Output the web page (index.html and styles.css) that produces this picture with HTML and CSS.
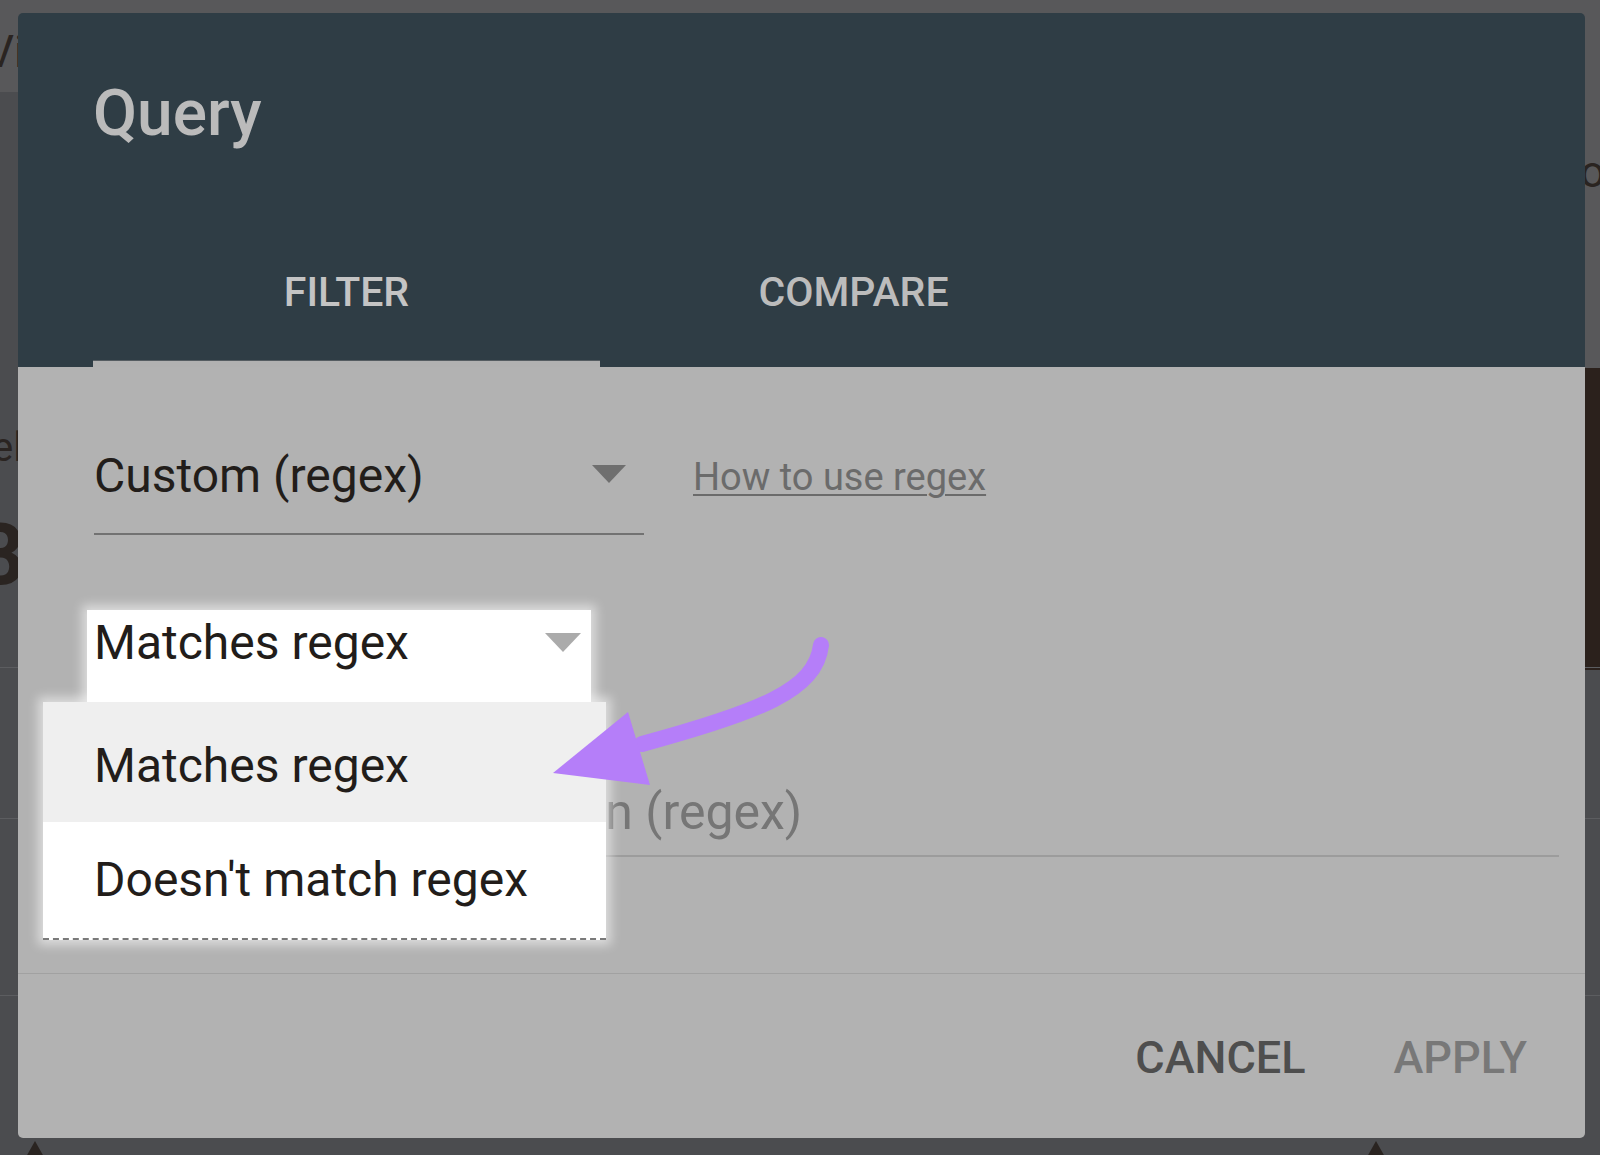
FILE: index.html
```html
<!DOCTYPE html>
<html lang="en">
<head>
<meta charset="utf-8">
<title>Query filter</title>
<link rel="stylesheet" href="styles.css">
</head>
<body>
<div class="scene">
  <div class="behind" aria-hidden="true">
    <div class="bg-strip"></div>
    <div class="bg-right-top"></div>
    <div class="bg-right-brown"></div>
    <div class="bg-line l1"></div>
    <div class="bg-line l2"></div>
    <div class="bg-line l3"></div>
    <span class="bg-txt t-v">Vi</span>
    <span class="bg-txt t-el">el</span>
    <span class="bg-txt t-8">8</span>
    <span class="bg-txt t-o">o</span>
    <i class="bg-tri tri1"></i>
    <i class="bg-tri tri2"></i>
  </div>

  <div class="dialog">
    <header class="dlg-header">
      <h1 class="dlg-title">Query</h1>
      <nav class="tabs">
        <div class="tab active">FILTER</div>
        <div class="tab">COMPARE</div>
      </nav>
    </header>

    <section class="dlg-body">
      <div class="row-type">
        <div class="select-type"><span>Custom (regex)</span><i class="caret"></i></div>
        <a class="help-link">How to use regex</a>
      </div>

      <div class="match-wrap">
        <div class="select-open"><span>Matches regex</span><i class="caret caret-light"></i></div>
        <ul class="menu">
          <li class="menu-item hovered">Matches regex</li>
          <li class="menu-item second">Doesn't match regex</li>
        </ul>
      </div>

      <div class="input-line"><span class="placeholder">Regular expression (regex)</span></div>
    </section>

    <footer class="dlg-footer">
      <button class="btn cancel">CANCEL</button>
      <button class="btn apply">APPLY</button>
    </footer>
  </div>

  <svg class="annotation" viewBox="0 0 1600 1155" width="1600" height="1155" aria-hidden="true">
    <path d="M 821 645 C 816 690, 760 712, 642 744" fill="none" stroke="#b57ef9" stroke-width="16" stroke-linecap="round"/>
    <polygon points="628,712 553,773 650,785" fill="#b57ef9"/>
  </svg>
</div>
</body>
</html>
```

FILE: styles.css
```css
html, body {
  margin: 0;
  padding: 0;
}

body {
  background: #4b4c4f;
  font-family: Roboto, "Noto Sans", "Liberation Sans", sans-serif;
}

.scene {
  position: relative;
  width: 1600px;
  height: 1155px;
  overflow: hidden;
  padding-top: 13px;
  box-sizing: border-box;
}

/* ---------- page behind the modal ---------- */
.behind {
  position: absolute;
  inset: 0;
  z-index: 0;
}

.bg-strip {
  position: absolute;
  left: 0;
  top: 0;
  width: 1600px;
  height: 92px;
  background: #58585a;
}

.bg-right-top {
  position: absolute;
  right: 0;
  top: 0;
  width: 20px;
  height: 368px;
  background: #58585a;
}

.bg-right-brown {
  position: absolute;
  right: 0;
  top: 368px;
  width: 20px;
  height: 302px;
  background: #2b211c;
}

.bg-line {
  position: absolute;
  left: 0;
  width: 1600px;
  height: 1px;
  background: #5c5d60;
}
.bg-line.l1 { top: 667px; }
.bg-line.l2 { top: 818px; }
.bg-line.l3 { top: 995px; }

.bg-txt {
  position: absolute;
  color: #2a2421;
  line-height: 1;
}
.t-v { left: -14px; top: 30px; font-size: 44px; }
.t-el { left: -8px; top: 428px; font-size: 40px; }
.t-8 { left: -24px; top: 512px; font-size: 86px; font-weight: 700; }
.t-o { left: 1580px; top: 150px; font-size: 44px; }

.bg-tri {
  position: absolute;
  width: 0;
  height: 0;
  border-left: 9px solid transparent;
  border-right: 9px solid transparent;
  border-bottom: 16px solid #2a2421;
}
.tri1 { left: 26px; top: 1141px; }
.tri2 { left: 1367px; top: 1141px; }

/* ---------- dialog ---------- */
.dialog {
  position: relative;
  z-index: 1;
  margin-left: 18px;
  width: 1567px;
  height: 1125px;
  display: flex;
  flex-direction: column;
  border-radius: 5px;
  overflow: hidden;
}

.dlg-header {
  flex: none;
  height: 354px;
  background: #2f3d45;
  padding-left: 75px;
  display: flex;
  flex-direction: column;
  box-sizing: border-box;
}

.dlg-title {
  margin: 69px 0 0;
  font-size: 64px;
  line-height: 64px;
  font-weight: 500;
  color: #bbbbbb;
}

.tabs {
  margin-top: auto;
  display: flex;
  height: 95px;
}

.tab {
  position: relative;
  width: 507px;
  text-align: center;
  font-size: 41px;
  line-height: 40px;
  font-weight: 500;
  color: #bcbcbc;
}
.tab.active { color: #c4c4c4; }

.tab.active::after {
  content: "";
  position: absolute;
  left: 0;
  right: 0;
  bottom: 0;
  height: 6px;
  background: #b1b1b1;
  border-top: 1px solid #555c61;
}

/* ---------- body ---------- */
.dlg-body {
  flex: 1;
  background: #b2b2b2;
  padding: 85px 26px 0 76px;
  position: relative;
}

.row-type {
  display: flex;
  align-items: flex-start;
}

.select-type {
  width: 550px;
  height: 83px;
  box-sizing: border-box;
  border-bottom: 2px solid #727272;
  padding-right: 18px;
  display: flex;
  justify-content: space-between;
  align-items: flex-start;
  font-size: 48px;
  line-height: 48px;
  color: #221d1a;
}

.caret {
  width: 0;
  height: 0;
  margin-top: 13px;
  border-left: 17px solid transparent;
  border-right: 17px solid transparent;
  border-top: 18px solid #6f6f6f;
}

.caret-light {
  margin-top: 14px;
  border-left-width: 18px;
  border-right-width: 18px;
  border-top: 19px solid #ababab;
}

.help-link {
  margin-left: 49px;
  margin-top: 6px;
  font-size: 38px;
  line-height: 38px;
  color: #6b6b6b;
  text-decoration: underline;
  text-decoration-thickness: 2px;
  text-underline-offset: 4px;
}

.match-wrap {
  position: relative;
  margin-top: 75px;
  margin-left: -7px;
  width: 504px;
}

.select-open {
  height: 92px;
  box-sizing: border-box;
  background: #ffffff;
  padding: 9px 10px 0 7px;
  display: flex;
  justify-content: space-between;
  align-items: flex-start;
  font-size: 48px;
  line-height: 48px;
  color: #221d1a;
  box-shadow: 0 0 10px 5px rgba(255, 255, 255, 0.55);
}

.menu {
  position: absolute;
  z-index: 2;
  top: 92px;
  left: -44px;
  width: 563px;
  margin: 0;
  padding: 0;
  list-style: none;
  background: #ffffff;
  border-bottom: 2px dashed #7a7a7a;
  box-shadow: 0 0 10px 5px rgba(255, 255, 255, 0.55);
}

.menu-item {
  box-sizing: border-box;
  padding-left: 51px;
  font-size: 48px;
  line-height: 48px;
  color: #221d1a;
}

.menu-item.hovered {
  height: 120px;
  padding-top: 40px;
  background: #efefef;
}

.menu-item.second {
  height: 116px;
  padding-top: 34px;
  background: #ffffff;
}

.input-line {
  margin-top: 86px;
  height: 67px;
  border-bottom: 2px solid #9c9c9c;
  font-size: 50px;
  line-height: 48px;
}

.placeholder {
  display: inline-block;
  margin-left: 115px;
  color: #767676;
}

/* ---------- footer ---------- */
.dlg-footer {
  flex: none;
  height: 165px;
  box-sizing: border-box;
  border-top: 1px solid #a1a1a1;
  background: #b2b2b2;
  display: flex;
  justify-content: flex-end;
  align-items: center;
  gap: 88px;
  padding: 3px 58px 0 0;
}

.btn {
  background: none;
  border: 0;
  padding: 0;
  font-family: inherit;
  font-size: 45px;
  line-height: 45px;
  font-weight: 500;
}

.btn.cancel { color: #4e4e4e; }
.btn.apply { color: #787878; }

/* ---------- annotation overlay ---------- */
.annotation {
  position: absolute;
  left: 0;
  top: 0;
  z-index: 3;
  pointer-events: none;
}
```
